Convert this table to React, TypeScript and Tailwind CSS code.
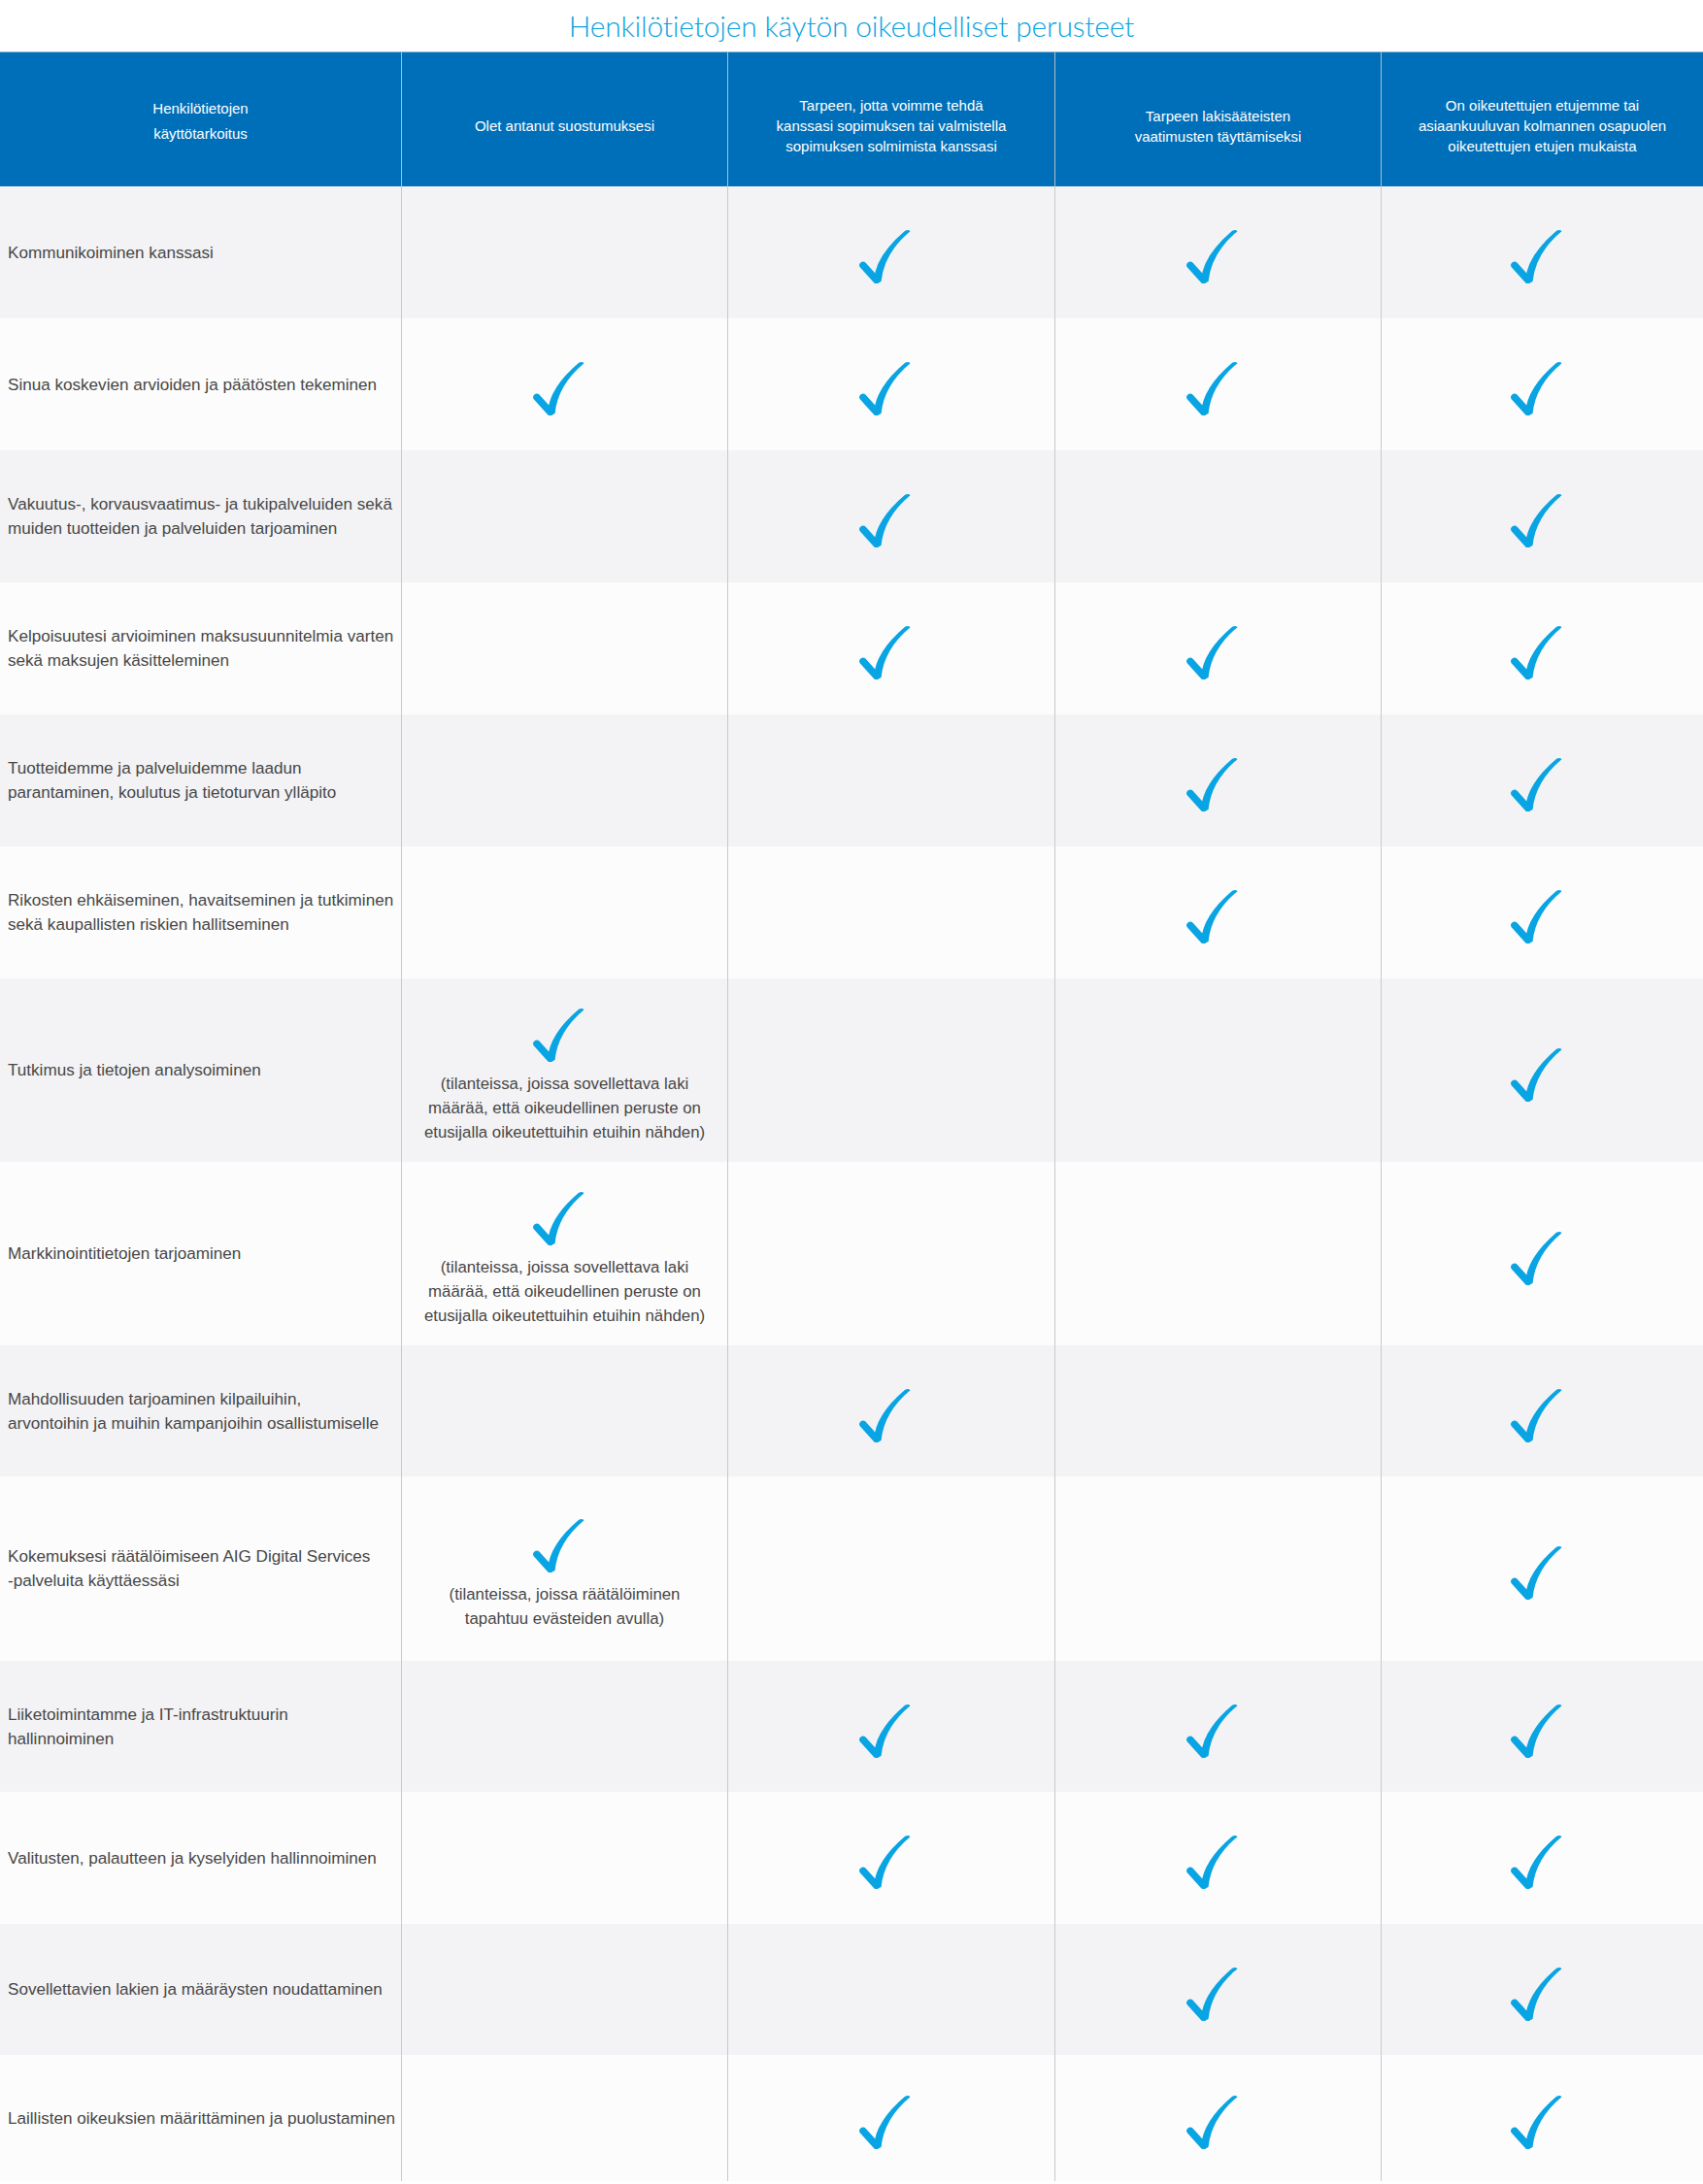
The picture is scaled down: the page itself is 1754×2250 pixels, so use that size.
type Mark = 0 | 1 | string[]

type Row = {
  lines: string[]
  marks: Mark[]
  h: string
}

const NOTE_LAW = [
  '(tilanteissa, joissa sovellettava laki',
  'määrää, että oikeudellinen peruste on',
  'etusijalla oikeutettuihin etuihin nähden)',
]

const NOTE_COOKIES = ['(tilanteissa, joissa räätälöiminen', 'tapahtuu evästeiden avulla)']

const HEADERS: { lines: string[]; extra: string }[] = [
  { lines: ['Henkilötietojen', 'käyttötarkoitus'], extra: 'leading-[26px] pt-[3px]' },
  { lines: ['Olet antanut suostumuksesi'], extra: 'leading-[21px] pt-[13px]' },
  {
    lines: [
      'Tarpeen, jotta voimme tehdä',
      'kanssasi sopimuksen tai valmistella',
      'sopimuksen solmimista kanssasi',
    ],
    extra: 'leading-[21px] pt-[13px]',
  },
  { lines: ['Tarpeen lakisääteisten', 'vaatimusten täyttämiseksi'], extra: 'leading-[21px] pt-[13px]' },
  {
    lines: [
      'On oikeutettujen etujemme tai',
      'asiaankuuluvan kolmannen osapuolen',
      'oikeutettujen etujen mukaista',
    ],
    extra: 'leading-[21px] pt-[13px]',
  },
]

const ROWS: Row[] = [
  { lines: ['Kommunikoiminen kanssasi'], marks: [0, 1, 1, 1], h: 'h-[136px]' },
  { lines: ['Sinua koskevien arvioiden ja päätösten tekeminen'], marks: [1, 1, 1, 1], h: 'h-[136px]' },
  {
    lines: ['Vakuutus-, korvausvaatimus- ja tukipalveluiden sekä', 'muiden tuotteiden ja palveluiden tarjoaminen'],
    marks: [0, 1, 0, 1],
    h: 'h-[136px]',
  },
  {
    lines: ['Kelpoisuutesi arvioiminen maksusuunnitelmia varten', 'sekä maksujen käsitteleminen'],
    marks: [0, 1, 1, 1],
    h: 'h-[136px]',
  },
  {
    lines: ['Tuotteidemme ja palveluidemme laadun', 'parantaminen, koulutus ja tietoturvan ylläpito'],
    marks: [0, 0, 1, 1],
    h: 'h-[136px]',
  },
  {
    lines: ['Rikosten ehkäiseminen, havaitseminen ja tutkiminen', 'sekä kaupallisten riskien hallitseminen'],
    marks: [0, 0, 1, 1],
    h: 'h-[136px]',
  },
  { lines: ['Tutkimus ja tietojen analysoiminen'], marks: [NOTE_LAW, 0, 0, 1], h: 'h-[189px]' },
  { lines: ['Markkinointitietojen tarjoaminen'], marks: [NOTE_LAW, 0, 0, 1], h: 'h-[189px]' },
  {
    lines: ['Mahdollisuuden tarjoaminen kilpailuihin,', 'arvontoihin ja muihin kampanjoihin osallistumiselle'],
    marks: [0, 1, 0, 1],
    h: 'h-[135px]',
  },
  {
    lines: ['Kokemuksesi räätälöimiseen AIG Digital Services', '-palveluita käyttäessäsi'],
    marks: [NOTE_COOKIES, 0, 0, 1],
    h: 'h-[190px]',
  },
  {
    lines: ['Liiketoimintamme ja IT-infrastruktuurin', 'hallinnoiminen'],
    marks: [0, 1, 1, 1],
    h: 'h-[135px]',
  },
  { lines: ['Valitusten, palautteen ja kyselyiden hallinnoiminen'], marks: [0, 1, 1, 1], h: 'h-[136px]' },
  { lines: ['Sovellettavien lakien ja määräysten noudattaminen'], marks: [0, 0, 1, 1], h: 'h-[135px]' },
  { lines: ['Laillisten oikeuksien määrittäminen ja puolustaminen'], marks: [0, 1, 1, 1], h: 'h-[130px]' },
]

// Hand-drawn style tick used in every "yes" cell
function Check() {
  return (
    <svg width="54" height="56" viewBox="0 0 54 57" className="mr-[14px] shrink-0 text-[#08a4e3]">
      <path
        d="M15.8 54 Q17.5 28 48.5 1.8 Q52 0 54 2.2 Q26.5 25 23.5 55 Q19.5 57.5 15.8 54 Z"
        fill="currentColor"
      />
      <path d="M4.5 38 L18.5 53.5" stroke="currentColor" strokeWidth="7.5" strokeLinecap="round" fill="none" />
    </svg>
  )
}

function MarkCell({ mark }: { mark: Mark }) {
  if (mark === 0) return <div className="border-l border-[#c9c9c9]" />
  if (mark === 1)
    return (
      <div className="flex items-center justify-center border-l border-[#c9c9c9] pt-[8px]">
        <Check />
      </div>
    )
  return (
    <div className="flex flex-col items-center justify-center border-l border-[#c9c9c9] pt-[12px]">
      <Check />
      <div className="mt-[10px] text-center text-[16.8px] leading-[25px] text-[#474747]">
        {mark.map((l) => (
          <div key={l} className="whitespace-nowrap">
            {l}
          </div>
        ))}
      </div>
    </div>
  )
}

export default function App() {
  return (
    <div className="w-[1754px] bg-white font-['Liberation_Sans',Arial,sans-serif]">
      <div className="flex h-[53px] items-center justify-center">
        <h1 className="font-['Lato','Liberation_Sans',sans-serif] text-[30px] font-light tracking-[-0.2px] text-[#0aa2e0]">
          Henkilötietojen käytön oikeudelliset perusteet
        </h1>
      </div>

      <div className="grid h-[139px] grid-cols-[413px_336px_337px_336px_332px] border-t border-[#9fbdd6] bg-[#006fb9]">
        {HEADERS.map((col, i) => (
          <div
            key={i}
            className={
              'flex flex-col items-center justify-center text-center text-[15px] text-white ' +
              col.extra +
              (i > 0 ? ' border-l border-[#b3bcc6]' : '')
            }
          >
            {col.lines.map((l) => (
              <div key={l} className="whitespace-nowrap">
                {l}
              </div>
            ))}
          </div>
        ))}
      </div>

      {ROWS.map((row, i) => (
        <div
          key={i}
          className={
            'grid grid-cols-[413px_336px_337px_336px_332px] ' +
            row.h +
            (i % 2 === 0 ? ' bg-[#f3f3f5]' : ' bg-[#fcfcfc]')
          }
        >
          <div className="flex flex-col justify-center pl-[8px] text-[17.1px] leading-[25px] text-[#474747]">
            {row.lines.map((l) => (
              <div key={l} className="whitespace-nowrap">
                {l}
              </div>
            ))}
          </div>
          {row.marks.map((m, j) => (
            <MarkCell key={j} mark={m} />
          ))}
        </div>
      ))}
    </div>
  )
}
